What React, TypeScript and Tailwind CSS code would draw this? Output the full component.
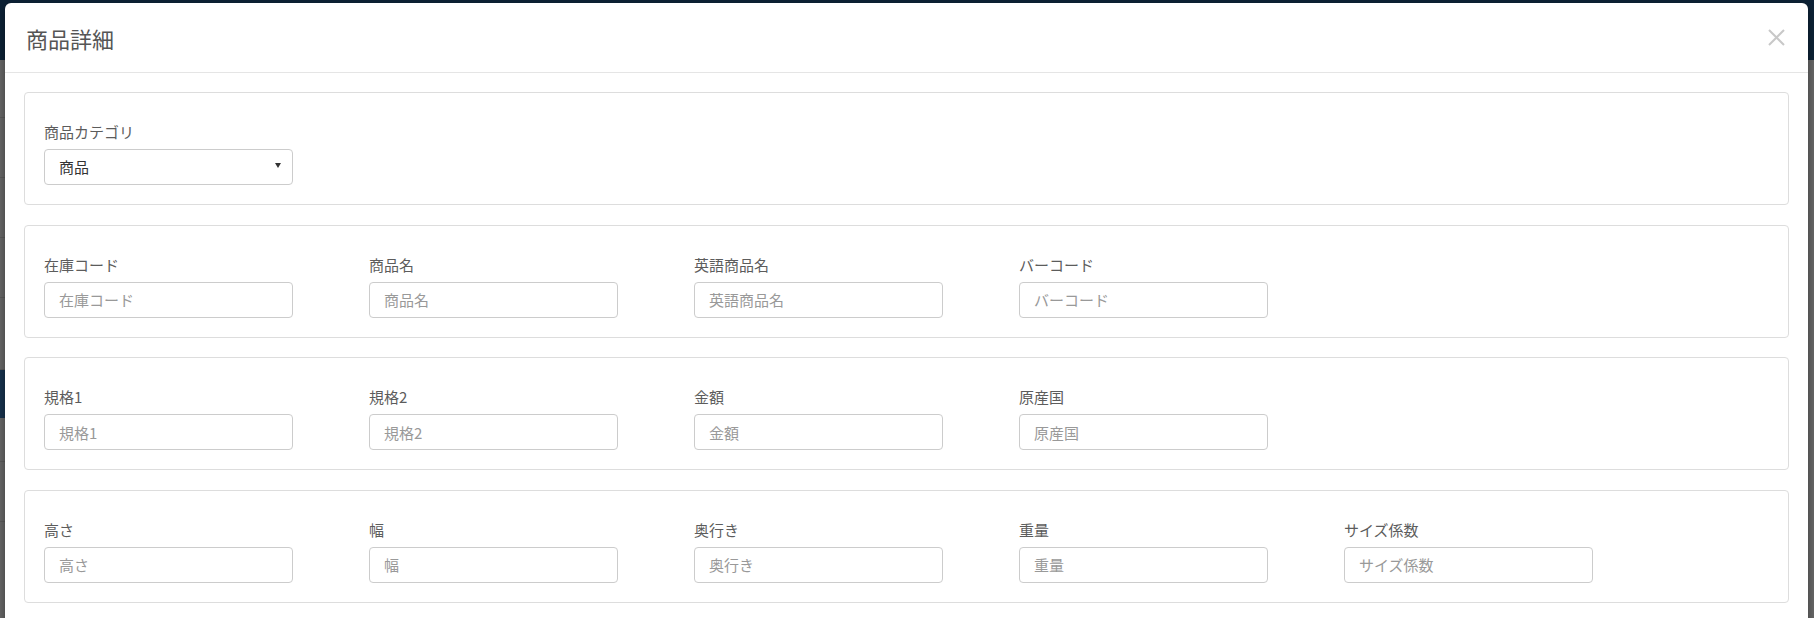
import React from 'react';

type Field = { label: string };

const rows: Field[][] = [
  [{ label: '在庫コード' }, { label: '商品名' }, { label: '英語商品名' }, { label: 'バーコード' }],
  [{ label: '規格1' }, { label: '規格2' }, { label: '金額' }, { label: '原産国' }],
  [{ label: '高さ' }, { label: '幅' }, { label: '奥行き' }, { label: '重量' }, { label: 'サイズ係数' }],
];

const Panel = ({ children }: { children: React.ReactNode }) => (
  <div className="border border-[#dddddd] rounded-[4px] pl-[19px] pt-[28px] pb-[19px] flex">
    {children}
  </div>
);

const TextField = ({ label }: Field) => (
  <div className="w-[325px] shrink-0 flex flex-col">
    <label className="text-[15px] leading-[21px] text-[#5c5c5c] mb-[7px]">{label}</label>
    <input
      type="text"
      placeholder={label}
      className="w-[249px] h-[36px] border border-[#cccccc] rounded-[4px] px-[14px] text-[15px] text-[#333333] placeholder:text-[#999999] outline-none"
    />
  </div>
);

export default function App() {
  return (
    <div className="relative h-[618px] w-full overflow-hidden bg-[#666666] font-['Noto_Sans_CJK_JP','Noto_Sans',sans-serif]">
      {/* dimmed page behind the modal */}
      <div className="h-[60px] bg-[#0d2236]" />
      <div className="flex h-full">
        <div className="w-[6px] flex flex-col">
          <div className="h-[58px] border-b border-[#5a5a5a]" />
          <div className="h-[60px] border-b border-[#5a5a5a]" />
          <div className="h-[60px] border-b border-[#5a5a5a]" />
          <div className="h-[60px] border-b border-[#5a5a5a]" />
          <div className="h-[72px] border-b border-[#5a5a5a]" />
          <div className="h-[48px] bg-[#17324d]" />
          <div className="h-[44px] border-b border-[#5a5a5a]" />
          <div className="h-[60px] border-b border-[#5a5a5a]" />
        </div>
        <div className="flex-1" />
      </div>

      {/* modal */}
      <div className="absolute left-[5px] right-[6px] top-[3px] bottom-[-40px] bg-white rounded-t-[6px] shadow-[0_3px_9px_rgba(0,0,0,0.4)] flex flex-col">
        <div className="h-[70px] shrink-0 border-b border-[#e5e5e5] flex items-center justify-between pl-[21px] pr-[23px]">
          <h4 className="text-[22px] leading-[30px] text-[#555555] font-normal">商品詳細</h4>
          <button className="w-[17px] h-[17px] flex items-center justify-center">
            <svg width="17" height="17" viewBox="0 0 17 17" fill="none" stroke="#c8c8c8" strokeWidth="2">
              <path d="M1 1L16 16M16 1L1 16" />
            </svg>
          </button>
        </div>

        <div className="px-[19px] pt-[19px] flex flex-col gap-[19.5px]">
          <Panel>
            <div className="w-[325px] shrink-0 flex flex-col">
              <label className="text-[15px] leading-[21px] text-[#5c5c5c] mb-[7px]">商品カテゴリ</label>
              <div className="relative w-[249px]">
                <select className="appearance-none w-[249px] h-[36px] border border-[#cccccc] rounded-[4px] px-[14px] text-[15px] text-[#333333] bg-white outline-none">
                  <option>商品</option>
                </select>
                <svg className="absolute right-[12px] top-[14px]" width="6" height="5" viewBox="0 0 6 5">
                  <path d="M0 0H6L3 5Z" fill="#333333" />
                </svg>
              </div>
            </div>
          </Panel>

          {rows.map((row, i) => (
            <Panel key={i}>
              {row.map((f) => (
                <TextField key={f.label} label={f.label} />
              ))}
            </Panel>
          ))}
        </div>
      </div>
    </div>
  );
}
